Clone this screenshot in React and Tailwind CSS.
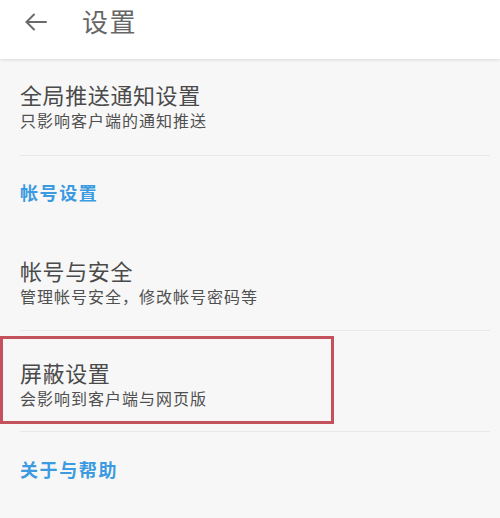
const font = { fontFamily: '"Noto Sans CJK SC", "Noto Sans", sans-serif' };

function Item({ title, sub, className = "" }) {
  return (
    <div className={`ml-5 mr-[10px] border-b border-[#e9e9e9] ${className}`}>
      <div className="text-[22px] leading-[28px] tracking-[0.6px] text-[#4a4a4a]">{title}</div>
      <div className="mt-[2px] text-[16px] leading-[20px] tracking-[1px] text-[#505050]">{sub}</div>
    </div>
  );
}

function Section({ label, className = "" }) {
  return (
    <div className={`ml-5 text-[18px] leading-[24px] tracking-[1.6px] font-bold text-[#3b9ae0] ${className}`}>
      {label}
    </div>
  );
}

export default function App() {
  return (
    <div className="w-[500px] h-[518px] overflow-hidden bg-[#f7f7f7]" style={font}>
      <div className="h-[59px] bg-white flex items-center shadow-[0_1px_3px_rgba(0,0,0,0.12)] relative z-10">
        <svg width="24" height="20" viewBox="0 0 24 20" className="ml-[24px] mt-[-16px]" fill="none" stroke="#6a6a6a" strokeWidth="2" strokeLinecap="round" strokeLinejoin="round">
          <path d="M22 10H2.5" />
          <path d="M10 2.5L2.5 10L10 17.5" />
        </svg>
        <span className="ml-[34px] mt-[-18px] text-[26px] leading-[34px] tracking-[1.5px] text-[#666]">设置</span>
      </div>

      <Item title="全局推送通知设置" sub="只影响客户端的通知推送" className="pt-[21px] pb-[25px]" />

      <Section label="帐号设置" className="pt-[24px]" />

      <Item title="帐号与安全" sub="管理帐号安全，修改帐号密码等" className="pt-[52px] pb-[24px]" />

      <div className="relative">
        <Item title="屏蔽设置" sub="会影响到客户端与网页版" className="pt-[27px] pb-[23px]" />
        <div className="absolute left-0 top-[5px] w-[334px] h-[88px] border-[3px] border-[#c4525c]" />
      </div>

      <Section label="关于与帮助" className="pt-[25px]" />
    </div>
  );
}
